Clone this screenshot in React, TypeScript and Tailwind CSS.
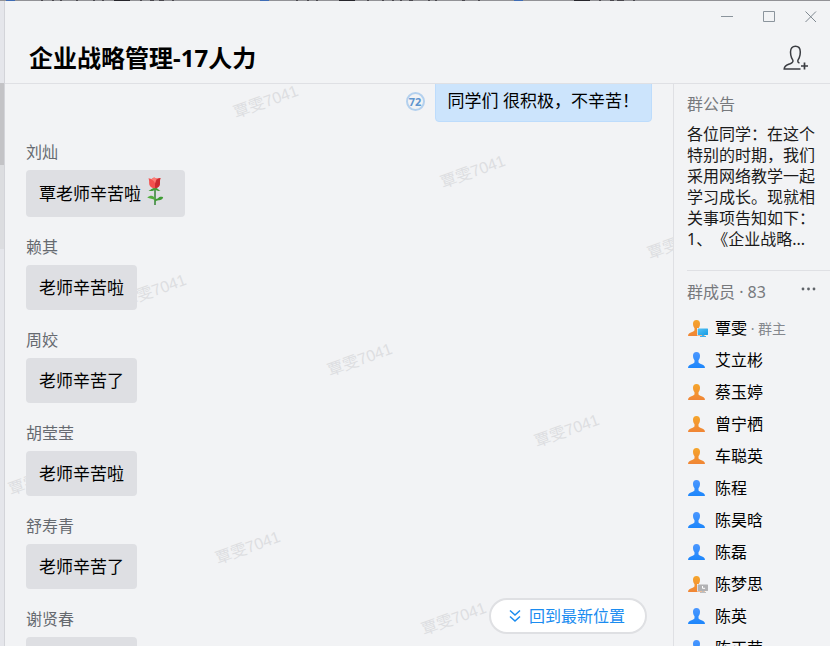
import React from 'react';

type Device = 'desktop' | 'away';

interface Member {
  name: string;
  color: 'blue' | 'orange';
  owner?: boolean;
  device?: Device;
}

interface Message {
  sender: string;
  text: string;
  rose?: boolean;
}

const messages: Message[] = [
  { sender: '刘灿', text: '覃老师辛苦啦', rose: true },
  { sender: '赖其', text: '老师辛苦啦' },
  { sender: '周姣', text: '老师辛苦了' },
  { sender: '胡莹莹', text: '老师辛苦啦' },
  { sender: '舒寿青', text: '老师辛苦了' },
  { sender: '谢贤春', text: '老师辛苦啦' },
];

const members: Member[] = [
  { name: '覃雯', color: 'orange', owner: true, device: 'desktop' },
  { name: '艾立彬', color: 'blue' },
  { name: '蔡玉婷', color: 'orange' },
  { name: '曾宁栖', color: 'orange' },
  { name: '车聪英', color: 'orange' },
  { name: '陈程', color: 'blue' },
  { name: '陈昊晗', color: 'blue' },
  { name: '陈磊', color: 'blue' },
  { name: '陈梦思', color: 'orange', device: 'away' },
  { name: '陈英', color: 'blue' },
  { name: '陈正荣', color: 'blue' },
];

// Centre points inside the chat pane
const watermarks = [
  { x: 261, y: 18 },
  { x: 468, y: 88 },
  { x: 675, y: 159 },
  { x: 149, y: 207 },
  { x: 355, y: 276 },
  { x: 562, y: 347 },
  { x: 36, y: 395 },
  { x: 243, y: 464 },
  { x: 449, y: 535 },
];

const PersonIcon: React.FC<{ color: Member['color']; device?: Device }> = ({ color, device }) => {
  const fill = `url(#person-${color})`;
  return (
    <svg className="w-[21px] h-[18px] shrink-0" viewBox="0 0 21 18" aria-hidden="true">
      <path
        d="M9.5 1C7.2 1 6 2.5 6 4.6c0 1.9.5 3.6 1.5 4.6v1.6c0 1-.6 1.5-1.8 1.9C3 13.600 1.200 14.200 1 17h17c-.2-2.800-2-3.400-4.700-4.300-1.200-.4-1.800-.9-1.800-1.900V9.200C12.500 8.200 13 6.500 13 4.600 13 2.500 11.800 1 9.500 1z"
        fill={fill}
      />
      {device === 'desktop' && (
        <g>
          <rect x="10" y="9" width="11" height="7.500" fill="#f2f3f5" />
          <rect x="10.700" y="9.600" width="10.300" height="6.400" rx=".4" fill="url(#screen)" />
          <path d="M15 16h2v1h2v1h-6v-1h2z" fill="#3fb0ec" />
        </g>
      )}
      {device === 'away' && (
        <g>
          <rect x="10" y="9" width="11" height="7.500" fill="#f2f3f5" />
          <rect x="10.700" y="9.600" width="10.300" height="6.400" rx=".4" fill="#b1b1b3" />
          <path d="M15 16h2v1h2v1h-6v-1h2z" fill="#bdbdbf" />
          <path d="M15.500 11v2.300h2.600" stroke="#fff" strokeWidth="1" fill="none" />
        </g>
      )}
    </svg>
  );
};

const Rose: React.FC = () => (
  <svg className="w-[25px] h-[30px] ml-1.5 -mt-1" viewBox="0 0 25 30" role="img" aria-label="玫瑰">
    <path d="M8 11V28" stroke="#3c8a3c" strokeWidth="1.600" fill="none" />
    <path d="M1.500 13.500c2.500-.3 3.500-2.500 6.500-3 2.500.5 3.500 2.500 5.500 3-2 1-3.800.2-5.500-1-1.800 1.500-4 2.200-6.500 1z" fill="#3f9c35" />
    <path d="M8 21.500C6.500 18 3.500 18 .2 20.500c2.800 1.600 5.300.7 7.800 2.700z" fill="#52ad3d" />
    <path d="M8 22.500c1.200-.8 2.500-.5 3.600-1.800.8-1.200 3-1 4.600-.5-.8 2.500-2.700 3.200-4.700 3-1.500.2-2.400.7-3.500 1.500z" fill="#3f9c35" />
    <path d="M1.500 1.200 4.500 2 7 .5l2.500 1L13.500 1c-.8 2.500-.3 4.500-.7 6.800C12.200 10 10 11.300 7.800 11.300 5 11.300 2.800 9.800 2.300 7.500 2 5.300 2.500 3.500 1.500 1.200z" fill="#f2504e" />
    <path d="M13.500 1c-2.800.4-4.700 2-5.400 5-.2 2 0 3.700 0 5.300 2.200-.1 4.100-1.300 4.700-3.500.4-2.300-.2-4.300.7-6.800z" fill="#c92a30" />
    <path d="M4 2.500c2 .6 3.500 2 4 4L9.500 1.500 7 .5z" fill="#fb7d75" />
  </svg>
);

// Sliver of the window behind, left uncovered along the top edge
const BackdropEdge: React.FC = () => (
  <svg className="block h-px w-full shrink-0 bg-[#929296]" preserveAspectRatio="none" viewBox="0 0 830 1" aria-hidden="true">
    <path d="M6 0h9v1H6zM260 0h9v1h-9zM514 0h9v1h-9z" fill="#3f6cb5" />
    <path d="M114 0h16v1h-16zM339 0h16v1h-16zM574 0h16v1h-16z" fill="#26242a" />
    <path
      d="M41 0h2v1h-2zM52 0h2v1h-2zM60 0h2v1h-2zM76 0h2v1h-2zM93 0h2v1h-2zM102 0h2v1h-2zM140 0h2v1h-2zM150 0h4v1h-4zM159 0h5v1h-5zM172 0h2v1h-2zM296 0h2v1h-2zM307 0h2v1h-2zM316 0h2v1h-2zM367 0h2v1h-2zM382 0h2v1h-2zM392 0h2v1h-2zM400 0h2v1h-2zM409 0h4v1h-4zM428 0h2v1h-2zM435 0h2v1h-2zM462 0h3v1h-3zM478 0h2v1h-2zM599 0h2v1h-2zM610 0h4v1h-4zM617 0h7v1h-7zM633 0h2v1h-2z"
      fill="#4a484e"
    />
  </svg>
);

const Header: React.FC = () => (
  <header className="shrink-0 border-b border-[#dfe0e4]">
    <div className="flex h-8 -mr-0.5 justify-end items-center">
      <button type="button" aria-label="最小化" className="w-[42px] h-8 flex items-center justify-center">
        <svg className="w-3.5 h-3.5" viewBox="0 0 14 14">
          <path d="M1 6.500h12" stroke="#8b949c" fill="none" />
        </svg>
      </button>
      <button type="button" aria-label="最大化" className="w-[42px] h-8 flex items-center justify-center">
        <svg className="w-3.5 h-3.5" viewBox="0 0 14 14">
          <path d="M1.500 1.500h11v10h-11z" stroke="#8b949c" fill="none" />
        </svg>
      </button>
      <button type="button" aria-label="关闭" className="w-[42px] h-8 flex items-center justify-center">
        <svg className="w-3.5 h-3.5" viewBox="0 0 14 14">
          <path d="M1.500 1.500 12 12M12 1.500 1.500 12" stroke="#7f8890" fill="none" />
        </svg>
      </button>
    </div>
    <div className="flex h-[50px] items-center justify-between pl-6 pr-5">
      <h1 className="text-[24px] leading-8 font-bold text-black">企业战略管理-17人力</h1>
      <button type="button" aria-label="添加成员">
        <svg className="w-7 h-7" viewBox="0 0 28 28" fill="none" stroke="#3b3d42" strokeWidth="1.500">
          <path d="M18.500 25H2.200c.1-2.700 1.600-3.600 4.500-4.700 2.900-1.100 4.300-1.900 4.300-3.400 0-1-.8-1.700-1.400-3C8.900 12.300 8.500 10.500 8.500 8c0-3.600 1.900-5.700 4.900-5.700s4.900 2.100 4.900 5.700c0 2.500-.4 4.300-1.100 5.900-.6 1.300-1.400 2-1.400 3 0 1 .5 1.700 1.700 2.300" />
          <path d="M22.500 18.500v7M19 22h7" strokeWidth="1.700" />
        </svg>
      </button>
    </div>
  </header>
);

const ChatPane: React.FC = () => (
  <main className="relative flex-1 min-w-0 overflow-hidden">
    <div aria-hidden="true">
      {watermarks.map((mark) => (
        <span
          key={`${mark.x}-${mark.y}`}
          className="absolute -translate-x-1/2 -translate-y-1/2 -rotate-20 whitespace-nowrap text-[16px] leading-6 text-[#dddee1] font-['Liberation_Sans','Noto_Sans_CJK_SC',sans-serif]"
          style={{ left: mark.x, top: mark.y }}
        >
          覃雯7041
        </span>
      ))}
    </div>

    <div className="relative -mt-2 flex flex-col gap-[18px] px-[21px]">
      <div className="flex items-center justify-end">
        <span className="mt-1 mr-2.5 w-[19px] h-[19px] rounded-full border-2 border-[#b3d0ee] text-[11px] leading-[15px] font-bold text-center text-[#5e95cf]">
          72
        </span>
        <p className="flex h-[46px] items-center rounded border border-[#bddcfc] bg-[#cce4fc] px-3 text-[17px] leading-6 pt-1 text-black">
          同学们 很积极，不辛苦！
        </p>
      </div>
      {messages.map((message) => (
        <div key={message.sender} className="flex flex-col items-start">
          <div className="mb-1.5 text-[16px] leading-6 text-[#666a70]">{message.sender}</div>
          <p
            className={`flex items-center rounded bg-[#dedfe3] px-[13px] text-[17px] leading-6 text-black ${
              message.rose ? 'h-[47px]' : 'h-[45px]'
            }`}
          >
            {message.text}
            {message.rose && <Rose />}
          </p>
        </div>
      ))}
    </div>

    <button
      type="button"
      className="absolute right-[26px] bottom-3 flex h-9 items-center gap-2 rounded-full border-2 border-[#dfe0e3] bg-white pl-[18px] pr-5 text-[16px] leading-6 text-[#1a8cf0]"
    >
      <svg className="w-3 h-3.5" viewBox="0 0 12 14" fill="none" stroke="#1a8cf0" strokeWidth="1.500">
        <path d="M1 1.500 6 6l5-4.500M1 7.500 6 12l5-4.500" />
      </svg>
      回到最新位置
    </button>
  </main>
);

const Sidebar: React.FC = () => (
  <aside className="w-[157px] shrink-0 overflow-hidden border-l border-[#dfe0e4] pl-[13px] pt-2">
    <h2 className="text-[16px] leading-6 text-[#77797d]">群公告</h2>
    <p className="mt-2 w-32 whitespace-pre-line text-[16px] leading-[21px] text-[#1a1a1a] [text-spacing-trim:space-all]">
      {'各位同学：在这个特别的时期，我们采用网络教学一起学习成长。现就相关事项告知如下：\n1、《企业战略...'}
    </p>
    <div className="mt-5 flex items-start justify-between border-t border-[#dfe0e4] pt-[9px] pr-3.5">
      <h2 className="text-[16px] leading-6 text-[#77797d]">群成员 · 83</h2>
      <button type="button" aria-label="更多" className="py-1">
        <svg className="w-4 h-2" viewBox="0 0 16 8" fill="#5f6369">
          <circle cx="3" cy="5" r="1.400" />
          <circle cx="8.500" cy="5" r="1.400" />
          <circle cx="14" cy="5" r="1.400" />
        </svg>
      </button>
    </div>
    <ul className="mt-2">
      {members.map((member) => (
        <li key={member.name} className="flex h-8 items-center gap-[7px] whitespace-nowrap text-[16px] leading-6 text-black">
          <PersonIcon color={member.color} device={member.device} />
          <span>
            {member.name}
            {member.owner && <span className="text-[14px] text-[#85888e]"> · 群主</span>}
          </span>
        </li>
      ))}
    </ul>
  </aside>
);

const App: React.FC = () => (
  <div className="flex h-screen flex-col overflow-hidden bg-[#f2f3f5] font-['Noto_Sans','Noto_Sans_CJK_SC',sans-serif]">
    <svg className="w-0 h-0 absolute" aria-hidden="true">
      <defs>
        <linearGradient id="person-blue" x1="0" y1="0" x2="0" y2="1">
          <stop offset="0" stopColor="#4b97ff" />
          <stop offset="1" stopColor="#1d86fb" />
        </linearGradient>
        <linearGradient id="person-orange" x1="0" y1="0" x2="0" y2="1">
          <stop offset="0" stopColor="#f5a52c" />
          <stop offset="1" stopColor="#f08535" />
        </linearGradient>
        <linearGradient id="screen" x1="0" y1="0" x2="1" y2="1">
          <stop offset="0" stopColor="#56c2f5" />
          <stop offset="1" stopColor="#159be4" />
        </linearGradient>
      </defs>
    </svg>
    <BackdropEdge />
    <div className="flex min-h-0 flex-1">
      {/* edge of the conversation list with its scrollbar */}
      <div className="flex w-[5px] shrink-0 flex-col border-r border-[#d3d4d9] bg-[#e5e6eb]">
        <div className="h-[82px]" />
        <div className="h-[82px] bg-[#c3c3c6]" />
        <div className="h-[84px] bg-[#dcdde0]" />
      </div>
      <div className="flex min-w-0 flex-1 flex-col">
        <Header />
        <div className="flex min-h-0 flex-1">
          <ChatPane />
          <Sidebar />
        </div>
      </div>
    </div>
  </div>
);

export default App;
